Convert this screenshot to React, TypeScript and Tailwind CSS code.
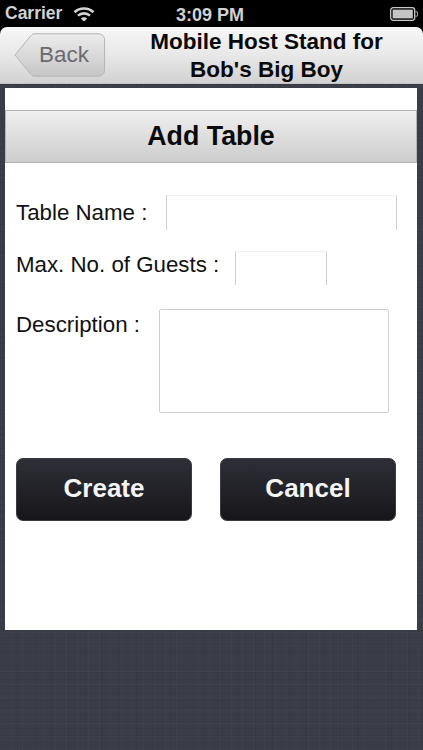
import React from 'react';

const font = { fontFamily: '"Liberation Sans", Arial, sans-serif' };

const WifiIcon = () => (
  <svg width="22" height="16" viewBox="0 0 22 16" fill="none" stroke="#d4d4d4" strokeWidth="2.6">
    <path d="M1.5 6.2C6.8 1.2 15.2 1.2 20.5 6.2" />
    <path d="M5 9.6C8.4 6.6 13.6 6.6 17 9.6" />
    <path d="M11 15.5L7.8 12.4C9.6 10.9 12.4 10.9 14.2 12.4Z" fill="#d4d4d4" stroke="none" />
  </svg>
);

const BatteryIcon = () => (
  <svg width="28" height="14" viewBox="0 0 28 14">
    <rect x="0.7" y="0.7" width="24" height="12.6" rx="2.5" fill="none" stroke="#c8c8c8" strokeWidth="1.3" />
    <rect x="2.6" y="2.6" width="20.2" height="8.8" fill="#c4c4c4" />
    <path d="M25.6 4.8h1.1a1 1 0 0 1 1 1v2.4a1 1 0 0 1-1 1h-1.1" fill="none" stroke="#c8c8c8" strokeWidth="1" />
  </svg>
);

const BackButton = () => (
  <button className="relative w-[92px] h-[44px] ml-[14px] mt-[6px] shrink-0">
    <svg className="absolute inset-0" width="92" height="44" viewBox="0 0 92 44">
      <defs>
        <linearGradient id="backFill" x1="0" y1="0" x2="0" y2="1">
          <stop offset="0" stopColor="#ececec" />
          <stop offset="1" stopColor="#c6c6c6" />
        </linearGradient>
      </defs>
      <path
        d="M1 22L17 2.5C18 1.3 19 .8 21 .8H84C88 .8 90.6 3.4 90.6 7V37C90.6 40.6 88 43.2 84 43.2H21C19 43.2 18 42.7 17 41.5Z"
        fill="url(#backFill)"
        stroke="#b4b4b4"
        strokeWidth="1"
      />
    </svg>
    <span className="relative block pl-[8px] text-[22.4px] leading-[44px] text-[#6a6a6e]">Back</span>
  </button>
);

const Label = ({ children }: { children: React.ReactNode }) => (
  <span className="block whitespace-nowrap text-[22.3px] leading-[26px] text-[#111]">{children}</span>
);

const DarkButton = ({ label }: { label: string }) => (
  <button className="h-[63px] w-[176px] pb-[2px] rounded-[7px] border border-[#3a3a40] bg-gradient-to-b from-[#2e2e37] to-[#17171b] text-[26px] font-bold text-[#f4f4f4]">
    {label}
  </button>
);

export default function App() {
  return (
    <div
      style={font}
      className="w-[423px] h-[750px] overflow-hidden bg-[#3a3d47] bg-[repeating-linear-gradient(90deg,rgba(255,255,255,0.02)_0px,rgba(255,255,255,0.02)_1px,transparent_1px,transparent_11px),repeating-linear-gradient(90deg,rgba(0,0,0,0.05)_0px,rgba(0,0,0,0.05)_1px,transparent_1px,transparent_17px),repeating-linear-gradient(0deg,rgba(0,0,0,0.05)_0px,rgba(0,0,0,0.05)_1px,transparent_1px,transparent_7px),repeating-linear-gradient(0deg,rgba(255,255,255,0.02)_0px,rgba(255,255,255,0.02)_1px,transparent_1px,transparent_13px)]"
    >
      <div className="bg-black">
        <div className="h-[27px] flex items-center relative px-[5px] text-[#d2d2d2] text-[17.5px] font-bold">
          <span>Carrier</span>
          <span className="ml-[11px]"><WifiIcon /></span>
          <span className="absolute left-[176px] top-[2px] text-[18px]">3:09 PM</span>
          <span className="ml-auto"><BatteryIcon /></span>
        </div>
        <div className="h-[57px] flex rounded-t-[7px] bg-gradient-to-b from-[#f7f7f7] via-[#e8e8e8] to-[#d2d2d2] border-b border-[#c4c4c4]">
          <BackButton />
          <div className="flex-1 pl-[22px] pr-[18px] pt-[1px] text-center text-[22.5px] leading-[28px] font-bold text-[#0a0a0a]">
            Mobile Host Stand for<br />Bob's Big Boy
          </div>
        </div>
      </div>

      <div className="mx-[5px] mt-[4px] h-[542px] w-[412px] bg-white pt-[22px]">
        <div className="h-[53px] border border-[#b4b4b4] bg-gradient-to-b from-[#efefef] to-[#cdcdcd] text-center text-[26.8px] leading-[51px] font-bold text-[#0a0a0a]">
          Add Table
        </div>

        <div className="px-[11px] pt-[32px]">
          <div className="flex items-start">
            <div className="w-[150px] pt-[5px] shrink-0"><Label>Table Name :</Label></div>
            <input className="h-[35px] w-[231px] border-x border-t border-x-[#d0d0d0] border-t-[#f0f0f0] bg-white outline-none" />
          </div>
          <div className="flex items-start mt-[21px]">
            <div className="w-[219px] pt-[1px] shrink-0"><Label>Max. No. of Guests :</Label></div>
            <input className="h-[34px] w-[92px] border-x border-t border-x-[#d0d0d0] border-t-[#f0f0f0] bg-white outline-none" />
          </div>
          <div className="flex items-start mt-[24px]">
            <div className="w-[143px] pt-[3px] shrink-0"><Label>Description :</Label></div>
            <textarea className="h-[104px] w-[230px] resize-none rounded-[2px] border border-[#cfcfcf] bg-white outline-none" />
          </div>
          <div className="flex justify-between mt-[45px] w-[380px] pr-[0px]">
            <DarkButton label="Create" />
            <DarkButton label="Cancel" />
          </div>
        </div>
      </div>
    </div>
  );
}
